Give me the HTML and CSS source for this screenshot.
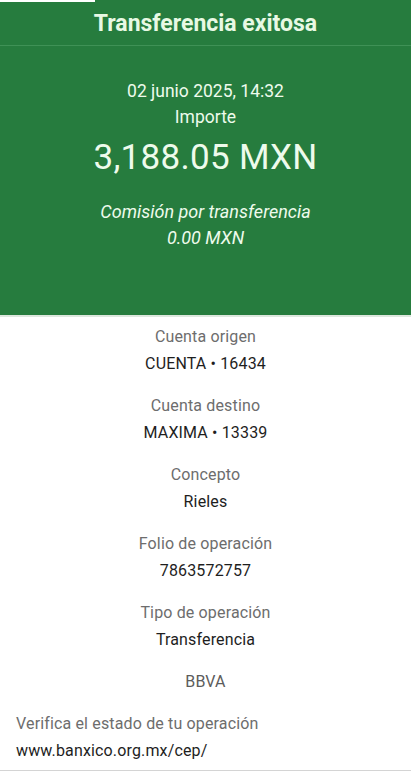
FILE: index.html
```html
<!DOCTYPE html>
<html lang="es">
<head>
  <meta charset="UTF-8" />
  <meta name="viewport" content="width=device-width, initial-scale=1.0"/>
  <title>Transferencia exitosa</title>
  <link rel="stylesheet" href="styles.css">
</head>
<body>
  <div class="pantalla">
    <div class="franja"></div>

    <div class="barra">Transferencia exitosa</div>

    <div class="resumen">
      <div class="fecha">02 junio 2025, 14:32</div>
      <div class="etiqueta">Importe</div>
      <div class="importe">3,188.05 MXN</div>
      <div class="comision">Comisión por transferencia</div>
      <div class="comision">0.00 MXN</div>
    </div>

    <div class="detalle">
      <div class="grupo">
        <div class="campo">Cuenta origen</div>
        <div class="valor">CUENTA • 16434</div>
      </div>
      <div class="grupo">
        <div class="campo">Cuenta destino</div>
        <div class="valor">MAXIMA • 13339</div>
      </div>
      <div class="grupo">
        <div class="campo">Concepto</div>
        <div class="valor">Rieles</div>
      </div>
      <div class="grupo">
        <div class="campo">Folio de operación</div>
        <div class="valor">7863572757</div>
      </div>
      <div class="grupo">
        <div class="campo">Tipo de operación</div>
        <div class="valor">Transferencia</div>
      </div>
      <div class="banco">BBVA</div>
      <div class="verifica">
        <div class="campo">Verifica el estado de tu operación</div>
        <div class="valor">www.banxico.org.mx/cep/</div>
      </div>
    </div>
  </div>
</body>
</html>
```

FILE: styles.css
```css
body {
  margin: 0;
  font-family: Roboto, "Noto Sans", sans-serif;
  background: #ffffff;
  color: #222;
}

.pantalla {
  position: relative;
  width: 411px;
  min-height: 771px;
  overflow: hidden;
}

/* resto de la barra de estado */
.franja {
  position: absolute;
  top: 0;
  left: 0;
  width: 95px;
  height: 2px;
  background: #ffffff;
}

.barra {
  background: #267c3e;
  color: #e8f9e4;
  font-size: 23px;
  font-weight: bold;
  text-align: center;
  height: 42px;
  line-height: 42px;
  padding-top: 3px;
  border-bottom: 1px solid #3f9156;
}

.resumen {
  background: #267c3e;
  color: #eefbec;
  text-align: center;
  padding: 32px 0 64px;
  border-bottom: 2px solid #dde7de;
}

.fecha, .etiqueta {
  font-size: 17.5px;
  line-height: 26px;
}

.importe {
  font-size: 35px;
  line-height: 40px;
  letter-spacing: 0.3px;
  margin: 8px 0 21px;
}

.comision {
  font-size: 18px;
  font-style: italic;
  line-height: 26px;
}

.detalle {
  display: flex;
  flex-direction: column;
  gap: 16px;
  padding: 7px 0 6px;
  border-bottom: 1px solid #d4d4d4;
  font-size: 16px;
  letter-spacing: 0.15px;
}

.grupo {
  text-align: center;
}

.campo {
  color: #6d6d6d;
  line-height: 26px;
}

.valor {
  color: #1e1e1e;
  line-height: 26px;
  margin-top: 1px;
}

.banco {
  text-align: center;
  color: #5c5c5c;
  line-height: 26px;
}

.verifica {
  padding: 0 16px;
}
```
